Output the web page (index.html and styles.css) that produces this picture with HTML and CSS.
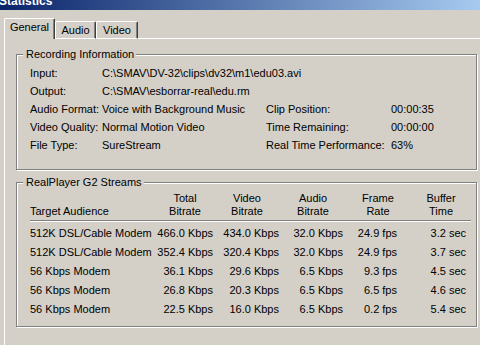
FILE: index.html
```html
<!DOCTYPE html>
<html>
<head>
<meta charset="utf-8">
<title>Statistics</title>
<link rel="stylesheet" href="styles.css">
</head>
<body>
<div class="window">
  <div class="titlebar"><span class="title-text">Statistics</span></div>
  <div class="tabstrip">
    <div class="tab sel">General</div>
    <div class="tab t-audio">Audio</div>
    <div class="tab t-video">Video</div>
    <div class="tab-fill"></div>
  </div>
  <div class="panel">
    <div class="group gb-rec">
      <div class="legend">Recording Information</div>
      <div class="info">
        <div>Input:</div><div class="span3">C:\SMAV\DV-32\clips\dv32\m1\edu03.avi</div>
        <div>Output:</div><div class="span3">C:\SMAV\esborrar-real\edu.rm</div>
        <div>Audio Format:</div><div>Voice with Background Music</div><div>Clip Position:</div><div>00:00:35</div>
        <div>Video Quality:</div><div>Normal Motion Video</div><div>Time Remaining:</div><div>00:00:00</div>
        <div>File Type:</div><div>SureStream</div><div>Real Time Performance:</div><div>63%</div>
      </div>
    </div>
    <div class="group gb-streams">
      <div class="legend">RealPlayer G2 Streams</div>
      <div class="streams">
        <div class="srow head">
          <div class="c1">Target Audience</div>
          <div>Total<br>Bitrate</div>
          <div>Video<br>Bitrate</div>
          <div>Audio<br>Bitrate</div>
          <div>Frame<br>Rate</div>
          <div>Buffer<br>Time</div>
        </div>
        <div class="sep"></div>
        <div class="srow data">
          <div class="c1">512K DSL/Cable Modem</div><div>466.0 Kbps</div><div>434.0 Kbps</div><div>32.0 Kbps</div><div>24.9 fps</div><div>3.2 sec</div>
        </div>
        <div class="srow data">
          <div class="c1">512K DSL/Cable Modem</div><div>352.4 Kbps</div><div>320.4 Kbps</div><div>32.0 Kbps</div><div>24.9 fps</div><div>3.7 sec</div>
        </div>
        <div class="srow data">
          <div class="c1">56 Kbps Modem</div><div>36.1 Kbps</div><div>29.6 Kbps</div><div>6.5 Kbps</div><div>9.3 fps</div><div>4.5 sec</div>
        </div>
        <div class="srow data">
          <div class="c1">56 Kbps Modem</div><div>26.8 Kbps</div><div>20.3 Kbps</div><div>6.5 Kbps</div><div>6.5 fps</div><div>4.6 sec</div>
        </div>
        <div class="srow data">
          <div class="c1">56 Kbps Modem</div><div>22.5 Kbps</div><div>16.0 Kbps</div><div>6.5 Kbps</div><div>0.2 fps</div><div>5.4 sec</div>
        </div>
      </div>
    </div>
  </div>
</div>
</body>
</html>
```

FILE: styles.css
```css
html, body {
  margin: 0;
  padding: 0;
  background: #d4d0c8;
}
body {
  width: 480px;
  height: 345px;
  overflow: hidden;
  font-family: "Liberation Sans", Arial, sans-serif;
  font-size: 11px;
  color: #000;
}
.window {
  width: 480px;
  height: 345px;
  overflow: hidden;
}
.titlebar {
  height: 10px;
  overflow: hidden;
  background: linear-gradient(to right, #0a246a, #a6caf0);
}
.title-text {
  display: block;
  margin-top: -6px;
  margin-left: -1px;
  font-weight: bold;
  font-size: 12px;
  line-height: 14px;
  color: #fff;
}
.tabstrip {
  display: flex;
  align-items: flex-end;
  margin-top: 8px;
  margin-left: 4px;
  height: 21px;
}
.tab {
  box-sizing: border-box;
  height: 18px;
  border-top: 1px solid #fff;
  border-left: 1px solid #fff;
  border-right: 1px solid #404040;
  border-bottom: 1px solid #fff;
  box-shadow: inset -1px 0 0 #808080;
  border-top-left-radius: 2px;
  border-top-right-radius: 2px;
  text-align: center;
  line-height: 14px;
  padding-top: 1px;
}
.tab.sel {
  width: 51px;
  height: 21px;
  border-bottom: none;
}
.t-audio { width: 41px; }
.t-video { width: 42px; }
.tab-fill {
  flex: 1;
  height: 1px;
  background: #fff;
}
.panel {
  margin-left: 4px;
  border-left: 1px solid #fff;
  padding: 15px 0 0 11px;
  height: 400px;
}
.group {
  box-sizing: border-box;
  width: 461px;
  border: 1px solid #808080;
  box-shadow: inset 1px 1px 0 #fff, 1px 1px 0 #fff;
  padding: 0 0 0 13px;
}
.gb-rec { height: 116px; }
.gb-streams { height: 145px; margin-top: 12px; }
.legend {
  width: fit-content;
  margin: -7px 0 0 -7px;
  padding: 0 2px 0 3px;
  line-height: 13px;
  background: #d4d0c8;
}
.info {
  display: grid;
  grid-template-columns: 72px 164px 125px 1fr;
  grid-auto-rows: 18px;
  line-height: 18px;
  margin-top: 3px;
  white-space: nowrap;
}
.span3 { grid-column: 2 / span 3; }
.streams {
  width: 442px;
  margin-top: 3px;
  white-space: nowrap;
}
.srow {
  display: grid;
  grid-template-columns: 126px 58px 66px 66px 64px 62px;
}
.head {
  line-height: 13px;
  text-align: center;
  padding-bottom: 2px;
}
.head > div { align-self: end; }
.head .c1 { text-align: left; }
.sep {
  width: 441px;
  height: 0;
  border-top: 1px solid #808080;
  border-bottom: 1px solid #fff;
}
.data {
  height: 19px;
  line-height: 19px;
}
.sep + .data { margin-top: 2px; }
.data > div { text-align: right; }
.data > .c1 { text-align: left; }
.data > div:nth-child(2) { padding-right: 1px; }
.data > div:nth-child(3) { padding-right: 1px; }
.data > div:nth-child(4) { padding-right: 3px; }
.data > div:nth-child(5) { padding-right: 13px; }
.data > div:nth-child(6) { padding-right: 6px; }
```
